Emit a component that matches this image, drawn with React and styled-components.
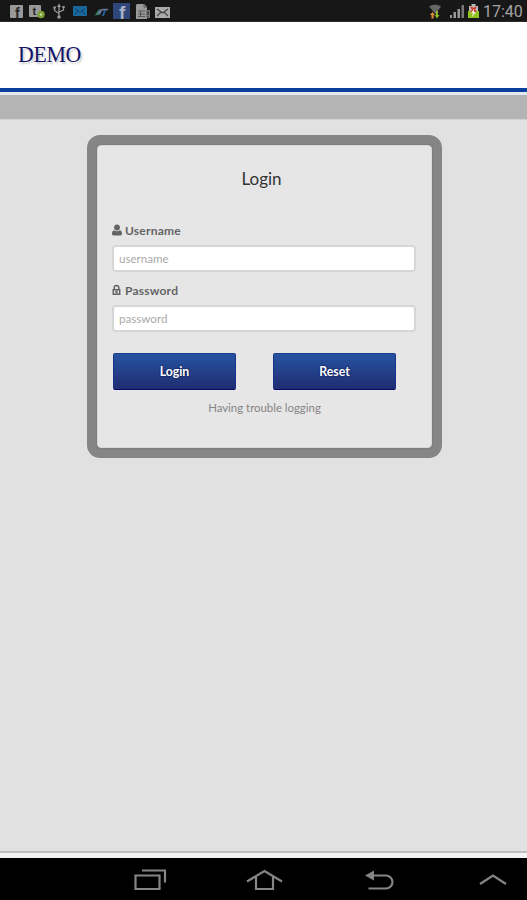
import React from 'react';
import styled, { createGlobalStyle } from 'styled-components';

const GlobalStyles = createGlobalStyle`
  * {
    box-sizing: border-box;
  }
  body {
    margin: 0;
    background: #e1e1e1;
    font-family: Lato, 'Liberation Sans', sans-serif;
  }
`;

const ScreenStyles = styled.div`
  display: flex;
  flex-direction: column;
  width: 527px;
  height: 900px;
  overflow: hidden;
`;

const StatusBarStyles = styled.div`
  display: flex;
  justify-content: space-between;
  height: 22px;
  padding: 0 4px 0 10px;
  background: #171717;
  border-bottom: 1px solid #2b2b2b;
`;

const TrayStyles = styled.div`
  display: flex;
  align-items: flex-start;
  gap: ${({ $gap }) => $gap}px;

  svg {
    display: block;
    flex: none;
    overflow: visible;
  }
`;

const ClockStyles = styled.time`
  width: 40px;
  color: #a3a3a3;
  font-family: Roboto, sans-serif;
  font-size: 16px;
  line-height: 24px;
  white-space: nowrap;
`;

const HeaderStyles = styled.header`
  height: 70px;
  padding: 19px 18px 0;
  background: #fff;
  border-bottom: 4px solid #09409f;

  h1 {
    margin: 0;
    color: #14146a;
    font-family: 'Liberation Serif', serif;
    font-size: 24px;
    font-weight: normal;
    line-height: 27px;
    letter-spacing: -0.4px;
    text-shadow: 2px 2px 2px #ccc;
    transform: scaleX(0.91);
    transform-origin: left;
  }
`;

const MenuStripStyles = styled.div`
  height: 28px;
  background: #b4b4b4;
  border-top: 3px solid #e3e7ee;
  border-bottom: 1px solid #d2d2d2;
`;

const MainStyles = styled.main`
  flex: 1;
  padding: 15px 85px 0 87px;
  background: #e1e1e1;
`;

const PanelStyles = styled.form`
  height: 323px;
  padding: 1px;
  background: #858585;
  border: 9px solid #858585;
  border-radius: 13px;
`;

const PanelBodyStyles = styled.div`
  height: 303px;
  padding: 22px 15px 0;
  background: #e6e6e6;
  border: 1px solid #d9d9d9;
  border-radius: 4px;
  box-shadow: 0 0 2px #666;

  h2 {
    margin: 0 0 27px;
    padding-right: 6px;
    color: #333;
    font-size: 17px;
    font-weight: normal;
    line-height: 22px;
    text-align: center;
  }
`;

const FieldStyles = styled.div`
  height: 60px;

  label {
    display: flex;
    align-items: center;
    gap: 3px;
    height: 28px;
    margin-left: -1px;
    padding-bottom: 2px;
    color: #646464;
    font-size: 12px;
    font-weight: bold;
    letter-spacing: 0.22px;
  }
  svg {
    flex: none;
  }
  input {
    display: block;
    width: 304px;
    height: 27px;
    margin-left: -1px;
    padding: 0 5px 1px;
    background: #fff;
    border: 2px solid #d6d6d6;
    border-radius: 4px;
    font-family: inherit;
    font-size: 11.6px;
  }
  input::placeholder {
    color: #aaa;
    opacity: 1;
  }
`;

const ActionsStyles = styled.div`
  display: flex;
  gap: 37px;
  margin-top: 16px;
`;

const ButtonStyles = styled.button`
  width: 123px;
  height: 37px;
  padding: 0;
  color: #fff;
  background: linear-gradient(#2653a2, #202d70);
  border: 1px solid #16348a;
  border-top-color: #193f91;
  border-bottom-color: #08086a;
  border-radius: 2px;
  font-family: inherit;
  font-size: 12.3px;
  font-weight: bold;
  text-shadow: 0 0 2px #00003c;
`;

const HelpStyles = styled.p`
  margin: 10px 0 0;
  color: #858585;
  font-size: 11.4px;
  line-height: 16px;
  text-align: center;
`;

const FooterStyles = styled.footer`
  height: 7px;
  background: #f3f3f3;
  border-top: 2px solid #bfbfbf;
`;

const NavBarStyles = styled.nav`
  display: flex;
  align-items: flex-start;
  gap: 79px;
  height: 42px;
  padding: 8px 0 0 133px;
  background: #000;

  svg {
    display: block;
    flex: none;
    fill: none;
    stroke: #858585;
    stroke-width: 2.2;
  }
`;

function FacebookIcon() {
  return (
    <svg width="13" height="22">
      <rect y="5" width="13" height="13" rx="1" fill="#999" />
      <text x="5" y="18" fill="#222" fontFamily="Liberation Sans, sans-serif" fontSize="14" fontWeight="bold">f</text>
    </svg>
  );
}

function ShareIcon() {
  return (
    <svg width="18" height="22">
      <rect y="5" width="12" height="12" rx="1" fill="#999" />
      <text x="3.5" y="15" fill="#222" fontFamily="Liberation Sans, sans-serif" fontSize="11" fontWeight="bold">t</text>
      <circle cx="12" cy="14.5" r="3.7" fill="#7b9e35" />
      <circle cx="12" cy="14.5" r="1.3" fill="#c4d6a0" />
    </svg>
  );
}

function UsbIcon() {
  return (
    <svg width="14" height="22" fill="none" stroke="#999" strokeWidth="1.2">
      <path d="M6 6v10M1.5 8v2.5L6 13.5M10.5 7v3L6 12" />
      <path d="M6 3.5L8 7H4z" fill="#999" stroke="none" />
      <circle cx="6" cy="17" r="1.8" fill="#999" stroke="none" />
      <path d="M.3 7.5h2.6M9.3 7h2.4" strokeWidth="2" />
    </svg>
  );
}

function MailIcon() {
  return (
    <svg width="14" height="22">
      <rect y="6" width="14" height="10" rx="1" fill="#19679b" />
      <path d="M2 8.5l5 4 5-4M2 14l3.5-3M12 14l-3.500-3" fill="none" stroke="#0c4268" />
    </svg>
  );
}

function AirlineIcon() {
  return (
    <svg width="14" height="22">
      <path d="M0 15.5c4 0 3-5 7-6.5L6 15z" fill="#32805c" />
      <path d="M5 12.5c2-4 4-4 11-3.500l-2 1.500H9l-2 4.500z" fill="#68799b" />
      <path d="M11 10h2l-2 6H9z" fill="#245f96" />
    </svg>
  );
}

function FacebookTileIcon() {
  return (
    <svg width="17" height="22">
      <rect y="3" width="17" height="16" fill="#2f4679" />
      <text x="6" y="19" fill="#a9b3c9" fontFamily="Liberation Sans, sans-serif" fontSize="19" fontWeight="bold">f</text>
    </svg>
  );
}

function SimCardIcon() {
  return (
    <svg width="13" height="22">
      <path d="M1 4h7l3 3v12H0V5z" fill="#999" />
      <path d="M2 11h7M2 14h7M2 16.5h7M4.5 11v6" stroke="#555" />
      <path d="M8 4v3h3" fill="none" stroke="#555" />
      <path d="M10 10h4v8h-4z" fill="#777" />
      <path d="M12 11v4M12 16v1" stroke="#222" />
    </svg>
  );
}

function EnvelopeIcon() {
  return (
    <svg width="15" height="22">
      <rect y="7" width="15" height="11" fill="#aaa" />
      <path d="M2 9l5.5 4L13 9M2 16l4-4M13 16l-4-4" fill="none" stroke="#444" strokeWidth="1.2" />
    </svg>
  );
}

function WifiIcon() {
  return (
    <svg width="16" height="22">
      <path d="M0 6.5c3.5-2.3 8.5-2.3 12 0L6.5 14z" fill="#666" />
      <path d="M3.5 12L6 15H4.5v3.5h-2V15H1z" fill="#e49232" />
      <path d="M8 18.5L5.5 15H7v-4h2v4h1.5z" fill="#8fba26" />
    </svg>
  );
}

function SignalIcon() {
  return (
    <svg width="15" height="22" fill="#999">
      <path d="M1 15h2v3H1zM4.500 12h2.500v6H4.500zM8.500 9H11v9H8.500z" />
      <path d="M12.500 5H15v13h-2.500z" fill="#777" />
    </svg>
  );
}

function BatteryIcon() {
  return (
    <svg width="11" height="22">
      <path d="M3.5 4h4v2H10v12H1V6h2.5z" fill="#bbb" />
      <path d="M0 11h11v7H0z" fill="#8fc420" />
      <path d="M3 7l5 5M8 7l-5 5" stroke="#d43b2b" strokeWidth="2" />
      <path d="M6 9l-3 4h2l-1 4 4-5H6z" fill="#f1f1df" />
    </svg>
  );
}

function UserIcon() {
  return (
    <svg width="10" height="12" fill="#646464">
      <circle cx="5" cy="3.500" r="2.900" />
      <path d="M2 6.300C.5 6.700 0 8.100 0 9.800 0 10.900.6 11.500 1.600 11.500h6.800c1 0 1.600-.6 1.600-1.700 0-1.700-.5-3.100-2-3.500-1.800 1.300-4.200 1.300-6 0z" />
    </svg>
  );
}

function LockIcon() {
  return (
    <svg width="10" height="12" fill="none" stroke="#646464">
      <path d="M2.200 6V3.700a2.300 2.300 0 0 1 4.600 0V6" strokeWidth="1.500" />
      <path d="M1.300 5.800h6.400v4.500H1.300z" strokeWidth="1.500" />
      <path d="M4.500 6.500v3" strokeWidth="2" />
    </svg>
  );
}

function StatusBar() {
  return (
    <StatusBarStyles>
      <TrayStyles $gap={6}>
        <FacebookIcon />
        <ShareIcon />
        <UsbIcon />
        <MailIcon />
        <AirlineIcon />
        <FacebookTileIcon />
        <SimCardIcon />
        <EnvelopeIcon />
      </TrayStyles>
      <TrayStyles $gap={4}>
        <WifiIcon />
        <SignalIcon />
        <BatteryIcon />
        <ClockStyles>17:40</ClockStyles>
      </TrayStyles>
    </StatusBarStyles>
  );
}

function Field({ icon: Icon, label, name, type = 'text' }) {
  return (
    <FieldStyles>
      <label htmlFor={name}>
        <Icon />
        {label}
      </label>
      <input id={name} name={name} type={type} placeholder={name} />
    </FieldStyles>
  );
}

function NavBar() {
  return (
    <NavBarStyles>
      <svg width="34" height="28">
        <path d="M2.5 9.5h24V23h-24zM9 4.500h23v12" />
      </svg>
      <svg width="38" height="28">
        <path d="M1 15.500L18.500 5 36 15.500M10 11v12h17V11" />
      </svg>
      <svg width="32" height="28">
        <path d="M9 9.500h14a6.500 6.500 0 0 1 0 13H5.500" />
        <path d="M2 9.500L11 4.500v10z" fill="#858585" stroke="none" />
      </svg>
      <svg width="34" height="28">
        <path d="M6 18l13-8.500L32 18" />
      </svg>
    </NavBarStyles>
  );
}

export default function App() {
  return (
    <ScreenStyles>
      <GlobalStyles />
      <StatusBar />
      <HeaderStyles>
        <h1>DEMO</h1>
      </HeaderStyles>
      <MenuStripStyles />
      <MainStyles>
        <PanelStyles onSubmit={(e) => e.preventDefault()}>
          <PanelBodyStyles>
            <h2>Login</h2>
            <Field icon={UserIcon} label="Username" name="username" />
            <Field icon={LockIcon} label="Password" name="password" type="password" />
            <ActionsStyles>
              <ButtonStyles type="submit">Login</ButtonStyles>
              <ButtonStyles type="reset">Reset</ButtonStyles>
            </ActionsStyles>
            <HelpStyles>Having trouble logging</HelpStyles>
          </PanelBodyStyles>
        </PanelStyles>
      </MainStyles>
      <FooterStyles />
      <NavBar />
    </ScreenStyles>
  );
}
